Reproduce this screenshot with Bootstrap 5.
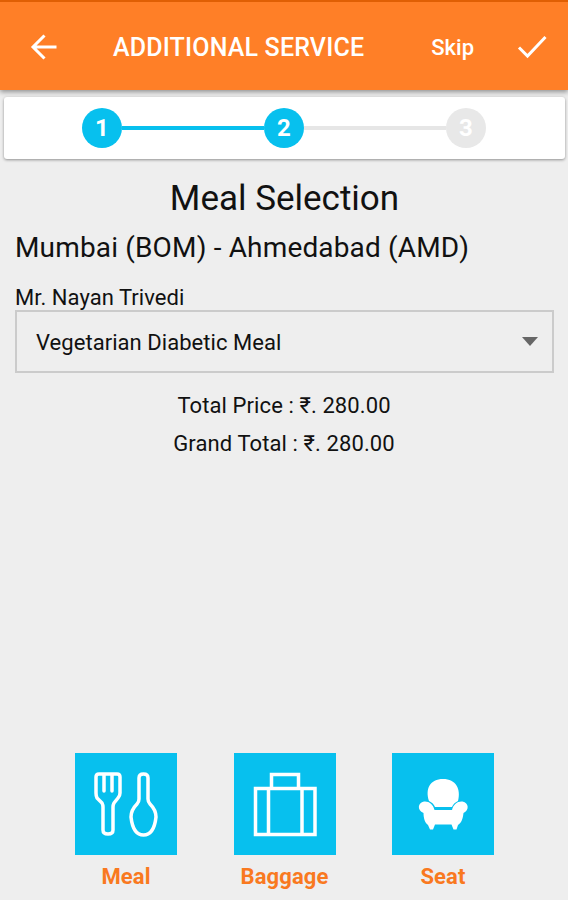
<!DOCTYPE html>
<html lang="en">
<head>
<meta charset="utf-8">
<meta name="viewport" content="width=device-width, initial-scale=1">
<title>Additional Service</title>
<link href="https://cdn.jsdelivr.net/npm/bootstrap@5.3.0/dist/css/bootstrap.min.css" rel="stylesheet">
<style>
body { font-family: Roboto, "Noto Sans", sans-serif; background: #eee; color: #111; }
.screen { height: 900px; overflow: hidden; }
.topbar { height: 90px; background: #ff7f27; border-top: 2px solid #e05f04; box-shadow: 0 2px 5px rgba(0,0,0,.4); padding: 2px 20px 0 29px; }
.topbar h1 { font-size: 25px; font-weight: 500; margin-left: 54px; line-height: 30px; letter-spacing: .17px; padding-top: 2px; }
.skip { font-size: 22px; font-weight: 500; line-height: 30px; margin-right: 42px; padding-top: 2px; }
.stepper { height: 62px; margin: 7px 3px 0 4px; border-radius: 3px; box-shadow: 0 1px 3px rgba(0,0,0,.4); padding: 0 79px 0 78px; }
.step { width: 40px; height: 40px; font-size: 24px; font-weight: 700; background: #07c0ee; }
.step-off { background: #e8e8e8; }
.link-bar { height: 4px; background: #07c0ee; }
.link-off { background: #e6e6e6; }
.heading { font-size: 35px; line-height: 42px; margin-top: 19px; padding-left: 1px; }
.route { font-size: 28px; line-height: 34px; margin-top: 11px; letter-spacing: .16px; }
.body-text { font-size: 22px; line-height: 26px; }
.passenger { margin-top: 20px; height: 25px; letter-spacing: .05px; }
.inset { padding: 0 15px; }
.picker { height: 63px; margin: 0 14px 0 15px; border: 2px solid #cbcbcb; padding: 2px 14px 0 19px; letter-spacing: .05px; }
.picker svg { margin-bottom: 2px; }
.totals { margin-top: 14px; letter-spacing: .1px; }
.price { line-height: 38px; }
.tiles { padding: 0 74px 10px 75px; }
.tile { width: 102px; }
.tile svg { background: #07c0ee; }
.tile span { color: #f9791f; font-size: 22px; font-weight: 700; line-height: 26px; margin-top: 9px; letter-spacing: .1px; }
</style>
</head>
<body>
<div class="screen d-flex flex-column">
  <header class="topbar d-flex align-items-center text-white flex-shrink-0">
    <svg width="30" height="30" viewBox="0 0 30 30" fill="none" stroke="#fff" stroke-width="3"><path d="M27.500 15H4M15.500 3.500L4 15L15.500 26.500"/></svg>
    <h1 class="mb-0 text-nowrap">ADDITIONAL SERVICE</h1>
    <div class="skip ms-auto">Skip</div>
    <svg width="32" height="30" viewBox="0 0 32 30" fill="none" stroke="#fff" stroke-width="3"><path d="M3 15.500L11.500 24L29.500 5"/></svg>
  </header>
  <section class="stepper bg-white d-flex align-items-center flex-shrink-0">
    <div class="step rounded-circle text-white d-flex align-items-center justify-content-center">1</div>
    <div class="link-bar flex-grow-1"></div>
    <div class="step rounded-circle text-white d-flex align-items-center justify-content-center">2</div>
    <div class="link-bar link-off flex-grow-1"></div>
    <div class="step step-off rounded-circle text-white d-flex align-items-center justify-content-center">3</div>
  </section>
  <main class="d-flex flex-column flex-grow-1">
    <h2 class="heading text-center mb-0 fw-normal">Meal Selection</h2>
    <div class="inset">
      <div class="route text-nowrap">Mumbai (BOM) - Ahmedabad (AMD)</div>
      <div class="passenger body-text">Mr. Nayan Trivedi</div>
    </div>
    <div class="picker body-text d-flex align-items-center justify-content-between">
      <span>Vegetarian Diabetic Meal</span>
      <svg width="16" height="9" viewBox="0 0 16 9"><path d="M0 0H16L8 9Z" fill="#666"/></svg>
    </div>
    <div class="totals body-text text-center">
      <div class="price">Total Price : ₹. 280.00</div>
      <div class="price">Grand Total : ₹. 280.00</div>
    </div>
  </main>
  <nav class="tiles d-flex justify-content-between flex-shrink-0">
    <div class="tile d-flex flex-column align-items-center">
      <svg width="102" height="102" viewBox="0 0 102 102" fill="none" stroke="#fff" stroke-width="3.500" stroke-linejoin="round" stroke-linecap="round">
        <path d="M21 24Q21 21 24 21H42Q45 21 45 24V40Q45 43 43 45L39 50Q38 52 38 54V77Q38 81 33 81Q28 81 28 77V54Q28 52 27 50L22 45Q21 43 21 40ZM29 22V38M37 22V38"/>
        <path d="M64 25Q64 21 68.500 21Q73 21 73 25V46Q73 49 75 51Q81 57 81 64Q79 82 68.500 82Q58 82 56 64Q56 57 62 51Q64 49 64 46Z"/>
      </svg>
      <span>Meal</span>
    </div>
    <div class="tile d-flex flex-column align-items-center">
      <svg width="102" height="102" viewBox="0 0 102 102" fill="none" stroke="#fff" stroke-width="3.500">
        <path d="M21.500 35.500H81V81.500H21.500ZM34.500 35.500V81.500M68 35.500V81.500M37.500 35.500V21.500H64.500V35.500"/>
      </svg>
      <span>Baggage</span>
    </div>
    <div class="tile d-flex flex-column align-items-center">
      <svg width="102" height="102" viewBox="0 0 102 102" fill="#fff">
        <path d="M37 48C33 36 38 26 51 26S69 36 66 48Q61.500 50 60 54H43Q41.500 50 37 48Z"/>
        <path d="M32 48.500C37 48 41 51 42.500 57H60C61.500 51 65.500 48 70.500 48.500C77 50 77.500 57 71.500 60C71 65 69.500 70 66 72L64.500 76.500H61.500L59.500 71.500H43L41 76.500H38L36 72C33 70 31.500 65 31.500 60C25 57 25.500 50 32 48.500Z"/>
      </svg>
      <span>Seat</span>
    </div>
  </nav>
</div>
<script src="https://cdn.jsdelivr.net/npm/bootstrap@5.3.0/dist/js/bootstrap.bundle.min.js"></script>
</body>
</html>
